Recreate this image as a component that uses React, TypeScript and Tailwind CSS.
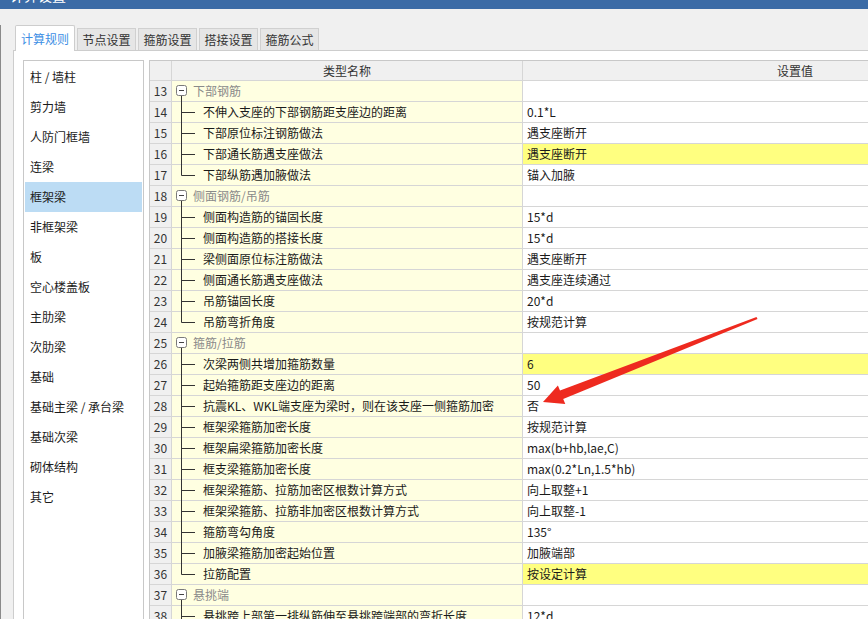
import React from 'react';

type Row = {
  n: number;
  name: string;
  value?: string;
  group?: boolean;
  last?: boolean;
  hl?: boolean;
};

const rows: Row[] = [
  { n: 13, name: '下部钢筋', group: true },
  { n: 14, name: '不伸入支座的下部钢筋距支座边的距离', value: '0.1*L' },
  { n: 15, name: '下部原位标注钢筋做法', value: '遇支座断开' },
  { n: 16, name: '下部通长筋遇支座做法', value: '遇支座断开', hl: true },
  { n: 17, name: '下部纵筋遇加腋做法', value: '锚入加腋', last: true },
  { n: 18, name: '侧面钢筋/吊筋', group: true },
  { n: 19, name: '侧面构造筋的锚固长度', value: '15*d' },
  { n: 20, name: '侧面构造筋的搭接长度', value: '15*d' },
  { n: 21, name: '梁侧面原位标注筋做法', value: '遇支座断开' },
  { n: 22, name: '侧面通长筋遇支座做法', value: '遇支座连续通过' },
  { n: 23, name: '吊筋锚固长度', value: '20*d' },
  { n: 24, name: '吊筋弯折角度', value: '按规范计算', last: true },
  { n: 25, name: '箍筋/拉筋', group: true },
  { n: 26, name: '次梁两侧共增加箍筋数量', value: '6', hl: true },
  { n: 27, name: '起始箍筋距支座边的距离', value: '50' },
  { n: 28, name: '抗震KL、WKL端支座为梁时，则在该支座一侧箍筋加密', value: '否' },
  { n: 29, name: '框架梁箍筋加密长度', value: '按规范计算' },
  { n: 30, name: '框架扁梁箍筋加密长度', value: 'max(b+hb,lae,C)' },
  { n: 31, name: '框支梁箍筋加密长度', value: 'max(0.2*Ln,1.5*hb)' },
  { n: 32, name: '框架梁箍筋、拉筋加密区根数计算方式', value: '向上取整+1' },
  { n: 33, name: '框架梁箍筋、拉筋非加密区根数计算方式', value: '向上取整-1' },
  { n: 34, name: '箍筋弯勾角度', value: '135°' },
  { n: 35, name: '加腋梁箍筋加密起始位置', value: '加腋端部' },
  { n: 36, name: '拉筋配置', value: '按设定计算', hl: true, last: true },
  { n: 37, name: '悬挑端', group: true },
  { n: 38, name: '悬挑跨上部第一排纵筋伸至悬挑跨端部的弯折长度', value: '12*d' },
];

const categories = [
  '柱 / 墙柱',
  '剪力墙',
  '人防门框墙',
  '连梁',
  '框架梁',
  '非框架梁',
  '板',
  '空心楼盖板',
  '主肋梁',
  '次肋梁',
  '基础',
  '基础主梁 / 承台梁',
  '基础次梁',
  '砌体结构',
  '其它',
];

const tabs = ['计算规则', '节点设置', '箍筋设置', '搭接设置', '箍筋公式'];

// 树形连接线
function TreeLine({ group, last }: { group?: boolean; last?: boolean }) {
  if (group) {
    return (
      <svg width="21" height="20" className="shrink-0 overflow-visible">
        <rect x="4.5" y="4.5" width="10" height="10" rx="2" fill="#fff" stroke="#7a7a7a" />
        <line x1="7" y1="9.5" x2="12" y2="9.5" stroke="#444" />
        <line x1="9.5" y1="15" x2="9.5" y2="21" stroke="#333" />
      </svg>
    );
  }
  return (
    <svg width="31" height="20" className="shrink-0 overflow-visible">
      <line x1="9.5" y1="-1" x2="9.5" y2={last ? 10.5 : 21} stroke="#333" />
      <line x1="9.5" y1="10.5" x2="23" y2="10.5" stroke="#333" />
    </svg>
  );
}

export default function App() {
  return (
    <div className="relative h-[619px] w-[868px] overflow-hidden bg-[#f0f0f0] font-['Noto_Sans_CJK_SC','Noto_Sans',sans-serif] text-[12px] text-[#1a1a1a]">
      {/* 标题栏 */}
      <div className="h-[9px] overflow-hidden bg-[#3b6ba6]">
        <div className="-mt-[15px] pl-[10px] text-[14px] leading-[20px] text-white">计算设置</div>
      </div>

      <div className="border-l border-[#8a8a8a] h-full">
        {/* 页签 */}
        <div className="mt-[16px] ml-[13px] flex items-end gap-[2px] pl-px">
          {tabs.map((t, i) =>
            i === 0 ? (
              <div
                key={t}
                className="relative z-10 -mb-px flex h-[26px] w-[60px] items-center justify-center rounded-t-[2px] border border-b-0 border-[#cdcdcd] bg-white text-[#3d8fe5]"
              >
                {t}
              </div>
            ) : (
              <div
                key={t}
                className="flex h-[22px] w-[59px] items-center justify-center border border-b-0 border-[#d0d0d0] bg-[#e6e6e6] text-[#333]"
              >
                {t}
              </div>
            )
          )}
        </div>

        {/* 面板 */}
        <div className="ml-[12px] flex h-full border-t border-l border-[#cdcdcd] bg-white pt-[9px] pl-[9px]">
          {/* 左侧分类 */}
          <div className="h-full w-[121px] shrink-0 border border-[#c8c8c8] bg-white pt-px">
            {categories.map((c) => (
              <div
                key={c}
                className={`mx-px flex h-[30px] items-center px-[5px] ${c === '框架梁' ? 'bg-[#bcdcf4]' : ''}`}
              >
                {c}
              </div>
            ))}
          </div>

          {/* 表格 */}
          <div className="ml-[5px] flex-1 overflow-hidden border-t border-l border-[#c8c8c8]">
            <div className="flex h-[20px] border-b border-[#d6d6d6] bg-[#f0f0f0] text-[#333]">
              <div className="w-[22px] shrink-0 border-r border-[#d6d6d6]" />
              <div className="flex w-[351px] shrink-0 items-center justify-center border-r border-[#d6d6d6]">
                类型名称
              </div>
              <div className="flex flex-1 items-center pl-[254px]">设置值</div>
            </div>

            {rows.map((r) => (
              <div key={r.n} className="flex h-[21px] border-b border-[#d6d6d6]">
                <div className="flex w-[22px] shrink-0 items-center justify-center border-r border-[#d6d6d6] bg-[#f0f0f0] text-[#333]">
                  {r.n}
                </div>
                <div className="flex w-[351px] shrink-0 items-center border-r border-[#d6d6d6] bg-[#ffffe1]">
                  <TreeLine group={r.group} last={r.last} />
                  <span className={r.group ? 'text-[#8a8a8a]' : ''}>{r.name}</span>
                </div>
                <div className={`flex flex-1 items-center pl-[4px] ${r.hl ? 'bg-[#ffff80]' : 'bg-white'}`}>
                  {r.value}
                </div>
              </div>
            ))}
          </div>
        </div>
      </div>

      {/* 红色箭头标注 */}
      <svg className="pointer-events-none absolute inset-0" width="868" height="619">
        <polygon
          points="543,402 565.3,404 563.2,398.9 757.5,319.1 756.5,316.9 560,390.5 557.9,385.4"
          fill="#ee2a1f"
        />
      </svg>
    </div>
  );
}
